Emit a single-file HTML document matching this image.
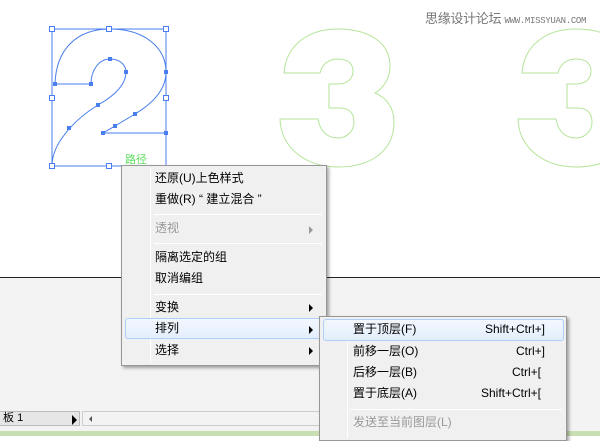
<!DOCTYPE html>
<html><head><meta charset="utf-8"><style>
*{margin:0;padding:0;box-sizing:border-box}
body{width:600px;height:436px;overflow:hidden;position:relative;background:#fff;font-family:"Liberation Sans","Noto Sans CJK SC",sans-serif;font-size:12px;color:#000}
.gray{position:absolute;left:0;top:277px;width:600px;height:159px;background:#f3f3f3;border-top:1px solid #222}
.menu{position:absolute;background:#f0f0f0;border:1px solid #979797;box-shadow:2px 2px 3px rgba(0,0,0,.35)}
.gut{position:absolute;top:2px;bottom:2px;width:1px;background:#e2e2e2;border-right:1px solid #fff}
.it{position:absolute;height:21px;line-height:21px}
.dis{color:#999}
.sep{position:absolute;height:1px;background:#d7d7d7;border-bottom:1px solid #fff}
.hl{position:absolute;border:1px solid #aecff7;border-radius:3px;background:linear-gradient(#f3f8fe,#e3eefc)}
.arr{position:absolute;width:0;height:0;border-left:4px solid #000;border-top:4px solid transparent;border-bottom:4px solid transparent}
.sc{position:absolute;right:16px;text-align:right}
</style></head><body>
<div style="position:absolute;left:425px;top:8px;color:#777;font-size:13px;letter-spacing:-0.3px">思缘设计论坛 <span style="font-size:9px;font-family:'Liberation Mono',monospace">WWW.MISSYUAN.COM</span></div>
<svg style="position:absolute;left:0;top:0" width="600" height="277">
<g fill="none" stroke="#b5e59a" stroke-width="1">
<path id="t" d="M284 73 L320 73 C322 64 329 59 338 59 C348 59 353 64 353 71 C353 79 347 84 338 84 L329 84 L329 108 L340 108 C349 108 354 113 354 122 C354 131 347 138 338 138 C327 138 320 131 318 119 L280 119 C281 148 306 167 338 167 C372 167 394 150 394 122 C394 108 387 98 375 93 C385 87 390 77 390 66 C390 42 368 29 338 29 C307 29 286 46 284 73 Z"/>
<use href="#t" x="238"/>
</g>
<g fill="none" stroke="#4a7ef0" stroke-width="1">
<path d="M55 84 L91 84 C91 70 99 59 110 59 C121 59 126 66 126 72 C126 85 114 96 98 105 C80 116 69 128 62 138 C55 148 52 157 52 166 L166 166 L166 133 L103 133 L115 126 L135 114 C155 102 166 88 166 72 C166 48 145 29 110 29 C76 29 56 50 55 84 Z" stroke="#9ad07a" stroke-width="0.6"/>
<path d="M55 84 L91 84 C91 70 99 59 110 59 C121 59 126 66 126 72 C126 85 114 96 98 105 C80 116 69 128 62 138 C55 148 52 157 52 166 L166 166 L166 133 L103 133 L115 126 L135 114 C155 102 166 88 166 72 C166 48 145 29 110 29 C76 29 56 50 55 84 Z"/>
<rect x="52" y="29" width="114" height="137"/>
</g>
<g fill="#fff" stroke="#4a7ef0">
<rect x="49.5" y="26.5" width="5" height="5"/><rect x="106.5" y="26.5" width="5" height="5"/><rect x="163.5" y="26.5" width="5" height="5"/>
<rect x="49.5" y="95.5" width="5" height="5"/><rect x="163.5" y="95.5" width="5" height="5"/>
<rect x="49.5" y="163.5" width="5" height="5"/><rect x="106.5" y="163.5" width="5" height="5"/>
</g>
<g fill="#4a7ef0">
<rect x="53" y="82" width="4" height="4"/><rect x="89" y="82" width="4" height="4"/><rect x="108" y="57" width="4" height="4"/><rect x="124" y="70" width="4" height="4"/>
<rect x="96" y="103" width="4" height="4"/><rect x="67" y="126" width="4" height="4"/><rect x="164" y="70" width="4" height="4"/>
<rect x="101" y="131" width="4" height="4"/><rect x="113" y="124" width="4" height="4"/><rect x="133" y="112" width="4" height="4"/><rect x="164" y="131" width="4" height="4"/>
</g>
<text x="125" y="163" fill="#5fe05f" font-size="11" font-family="Noto Sans CJK SC,sans-serif">路径</text>
</svg>
<div class="gray"></div>
<div style="position:absolute;left:0;top:411px;width:80px;height:15px;background:#e6e6e6;border:1px solid #bbb;border-left:none;font-size:11px;line-height:13px">&nbsp;板 1</div>
<div class="arr" style="left:72px;top:415px;border-top-width:5px;border-bottom-width:5px;border-left-width:5px"></div>
<div style="position:absolute;left:82px;top:411px;width:240px;height:15px;border:1px solid #ccc;background:#f3f3f3"></div>
<div style="position:absolute;left:89px;top:416px;width:0;height:0;border-right:3px solid #555;border-top:3px solid transparent;border-bottom:3px solid transparent"></div>
<div style="position:absolute;left:0;top:431px;width:600px;height:5px;background:#c8dfb2"></div>

<div class="menu" style="left:121px;top:165px;width:206px;height:201px">
<div class="gut" style="left:28px"></div>
<div class="it" style="left:33px;top:2px">还原(U)上色样式</div>
<div class="it" style="left:33px;top:23px">重做(R) “ 建立混合 ”</div>
<div class="sep" style="left:32px;right:4px;top:48px"></div>
<div class="it dis" style="left:33px;top:52px">透视</div><div class="arr" style="left:187px;top:60px;border-left-color:#999"></div>
<div class="sep" style="left:32px;right:4px;top:77px"></div>
<div class="it" style="left:33px;top:81px">隔离选定的组</div>
<div class="it" style="left:33px;top:102px">取消编组</div>
<div class="sep" style="left:32px;right:4px;top:128px"></div>
<div class="it" style="left:33px;top:131px">变换</div><div class="arr" style="left:187px;top:138px"></div>
<div class="hl" style="left:3px;top:152px;width:197px;height:21px"></div>
<div class="it" style="left:33px;top:152px">排列</div><div class="arr" style="left:187px;top:160px"></div>
<div class="it" style="left:33px;top:174px">选择</div><div class="arr" style="left:187px;top:181px"></div>
</div>

<div class="menu" style="left:319px;top:316px;width:248px;height:125px">
<div class="gut" style="left:27px"></div>
<div class="hl" style="left:3px;top:2px;width:241px;height:22px"></div>
<div class="it" style="left:33px;top:2px;width:208px">置于顶层(F)<span class="sc">Shift+Ctrl+]</span></div>
<div class="it" style="left:33px;top:24px;width:208px">前移一层(O)<span class="sc">Ctrl+]</span></div>
<div class="it" style="left:33px;top:45px;width:208px">后移一层(B)<span class="sc" style="right:20px">Ctrl+[</span></div>
<div class="it" style="left:33px;top:66px;width:208px">置于底层(A)<span class="sc" style="right:20px">Shift+Ctrl+[</span></div>
<div class="sep" style="left:30px;right:4px;top:92px"></div>
<div class="it dis" style="left:33px;top:95px">发送至当前图层(L)</div>
</div>
</body></html>
